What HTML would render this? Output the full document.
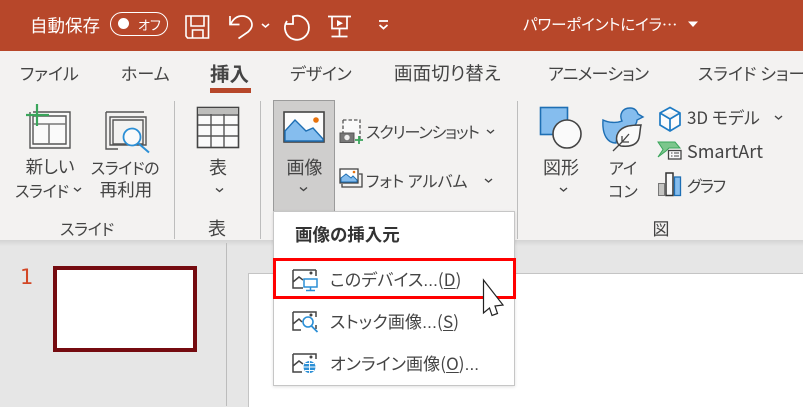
<!DOCTYPE html>
<html lang="ja"><head><meta charset="utf-8">
<style>
html,body{margin:0;padding:0}
body{width:803px;height:406px;position:relative;overflow:hidden;background:#e6e6e6;font-family:"Liberation Sans","Noto Sans CJK JP",sans-serif}
.a{position:absolute}
.t{position:absolute;white-space:nowrap;color:#444;font-size:16px;line-height:20px;font-family:"Noto Sans CJK JP","Liberation Sans",sans-serif;font-feature-settings:"palt";font-weight:400}
.c{text-align:center;transform:translateX(-50%)}
.w{color:#fff;font-weight:400}
.tab{font-size:17px;line-height:22px;top:62px;color:#444}
.d{font-family:"Liberation Sans",sans-serif}
svg{position:absolute;overflow:visible}
u{text-underline-offset:2px}
</style></head><body>
<div class="a" style="left:0;top:0;width:803px;height:51px;background:#b7472a"></div>
<div class="a" style="left:0;top:51px;width:803px;height:189px;background:#f3f2f1"></div>
<div class="a" style="left:0;top:240px;width:803px;height:6px;background:linear-gradient(#d4d4d4,#e6e6e6)"></div>

<!-- title bar -->
<div class="t w" style="left:30px;top:16px;font-size:17.5px">自動保存</div>
<div class="a" style="left:110px;top:12px;width:56px;height:22px;border:1px solid #fff;border-radius:12px"></div>
<div class="a" style="left:118px;top:18px;width:11px;height:11px;border-radius:50%;background:#fff"></div>
<div class="t w" style="left:138px;top:15px;font-size:13px">オフ</div>
<svg style="left:0;top:0" width="803" height="51" fill="none" stroke="#fff" stroke-width="1.6">
<path d="M186 16h22.500v22h-21l-1.500-2zM191 16v10h13V16M192.500 38v-8h10.500v8"/>
<path d="M230 16v8.500h9.500M230.500 24.500C233 19 237 16 242 16c6 0 10 4 10 9 0 3-2 5-4 7l-9.500 6.500" stroke-width="1.700"/>
<path d="M262 24l3.500 3 3.500-3" stroke-width="1.600"/>
<path d="M293 16.400A12 12 0 1 1 287 21" stroke-width="1.800"/><path d="M293 15.500v8.500h-7" stroke-width="1.800"/>
<path d="M328 16.500h23M332 16.500v12h15v-12M339.500 28.500v8M331.500 36.500h16" stroke-width="1.700"/>
<path d="M337 20l6 3.200-6 3.200z" fill="#fff" stroke="none"/>
<path d="M379 21h9" stroke-width="1.800"/><path d="M379.500 25l4 3.500 4-3.500" stroke-width="1.800"/>
<path d="M688 21.500h10l-5 5.500z" fill="#fff" stroke="none"/>
</svg>
<div class="t w" style="left:523px;top:14px;font-size:15.500px;letter-spacing:-.1px">パワーポイントにイラ…</div>

<!-- tabs -->
<div class="t tab" style="left:20px">ファイル</div>
<div class="t tab" style="left:121px">ホーム</div>
<div class="t tab" style="left:210px;font-weight:700;font-size:19.500px;color:#444">挿入</div>
<div class="a" style="left:210px;top:88px;width:41px;height:5px;background:#b7472a"></div>
<div class="t tab" style="left:290px;letter-spacing:-.2px">デザイン</div>
<div class="t tab" style="left:394px;font-size:18.500px;letter-spacing:.1px">画面切り替え</div>
<div class="t tab" style="left:548px;letter-spacing:-.8px">アニメーション</div>
<div class="t tab" style="left:698px">スライド ショー</div>

<!-- separators -->
<div class="a" style="left:174px;top:101px;width:1px;height:138px;background:#bdbdbd"></div>
<div class="a" style="left:260px;top:101px;width:1px;height:138px;background:#bdbdbd"></div>
<div class="a" style="left:517px;top:101px;width:1px;height:138px;background:#bdbdbd"></div>

<!-- selected button -->
<div class="a" style="left:273px;top:100px;width:60px;height:110px;background:#cfcecd;border:1px solid #9b9b9b"></div>

<svg style="left:0;top:0" width="803" height="240" fill="none">
<!-- new slide -->
<path d="M30 143V113h40v33H30z" fill="#fafafa" stroke="none"/>
<path d="M33 112h37v36H30v-36M33 116h33v28H33v-28" stroke="#555" stroke-width="1.400"/>
<path d="M33 124h33M49 124v20" stroke="#777" stroke-width="1.600"/>
<path d="M37 104v22M26 115h23" stroke="#3aa55b" stroke-width="2.200"/>
<!-- reuse -->
<path d="M106 112h38M106 112v37h12M110 117h36v28h-36zM113 120h30v24h-30z" stroke="#555" stroke-width="1.400"/>
<circle cx="132" cy="137" r="8.500" stroke="#2b8fd6" stroke-width="1.800" fill="#fafafa"/>
<path d="M138 143l11 9.500" stroke="#2b8fd6" stroke-width="2"/>
<!-- table -->
<rect x="197.500" y="107.500" width="41" height="40" fill="#fafafa" stroke="#444" stroke-width="1.600"/>
<rect x="198" y="108" width="40" height="6" fill="#bdbdbb"/>
<path d="M198 115h40M198 125h40M198 136h40M211 114v33M224 114v33" stroke="#555" stroke-width="1.400"/>
<!-- picture -->
<rect x="284" y="112" width="40" height="30" fill="#fcfcfc" stroke="#444" stroke-width="1.600"/>
<path d="M285 131l10-11 11 11 7-3 10 11v2h-38z" fill="#85bdee" stroke="#1e6fb4" stroke-width="1.400"/>
<circle cx="316" cy="120" r="2.800" fill="#e8710a"/>
<!-- screenshot -->
<rect x="343" y="120" width="17" height="18" fill="#fafafa"/>
<path d="M343 120h17v19" stroke="#555" stroke-width="1.300" stroke-dasharray="3.500 2"/>
<path d="M343 120v13" stroke="#555" stroke-width="1.300" stroke-dasharray="3.500 2"/>
<rect x="340" y="133" width="14" height="9.500" fill="#777" stroke="#555"/>
<circle cx="347" cy="137.500" r="2.700" fill="#eee"/>
<path d="M359 136v8M355 140h8" stroke="#3aa55b" stroke-width="1.800"/>
<!-- photo album -->
<rect x="340" y="169" width="18" height="14" fill="#fff" stroke="#444" stroke-width="1.300"/>
<path d="M341 178l5-4 5 4 2-2 4 4v2h-16z" fill="#85bdee" stroke="#1e6fb4"/>
<circle cx="354" cy="172" r="1.300" fill="#e8710a"/>
<path d="M359 174h3v13h-20v-3" stroke="#444" stroke-width="1.300"/>
<!-- shapes -->
<rect x="540.500" y="107.500" width="27" height="27" fill="#85bdee" stroke="#1e6fb4" stroke-width="1.600"/>
<circle cx="567" cy="134" r="14" fill="#fafafa" stroke="#444" stroke-width="1.600"/>
<!-- duck icon -->
<path d="M603 120c6 3 14 3 19 1-3-6 0-13 8-13 5 0 7 3 8 6l5 3-6 3c0 4-3 6-5 8l-14 7c-1 3-2 6-2 8-9 0-14-9-13-23z" fill="#85bdee" stroke="#1e6fb4" stroke-width="1.400"/>
<path d="M641 125c-11 0-19 1-23 8-3 5-1 12 3 13 9 1 16-1 18-8 1-4 1-9 2-13z" fill="#fafafa" stroke="#444" stroke-width="1.500"/>
<path d="M613 151l9-9 7-8M622 142v-6M622 142h7" stroke="#444" stroke-width="1.300"/>
<!-- 3D -->
<path d="M660 113l10-5.500 10 5.500v12l-10 6-10-6zM660 113l10 6 10-6M670 119v12" stroke="#1e7bc4" stroke-width="1.700" fill="#fcfcfc"/>
<!-- smartart -->
<path d="M658 142h17l5 6h-11l-3 3-8 6h-0l5-7.500z" fill="#7cc68c" stroke="#3aa55b"/>
<rect x="668.500" y="150.500" width="12.500" height="8.500" fill="#fafafa" stroke="#444" stroke-width="1.300"/>
<path d="M671 153h1.500M674 153h5M671 156h1.500M674 156h5" stroke="#444"/>
<!-- chart -->
<rect x="658.500" y="183.500" width="6" height="12" fill="#c4c4c2" stroke="#777"/>
<rect x="666" y="173" width="7" height="22.500" fill="#fafafa" stroke="#333" stroke-width="1.500"/>
<rect x="674.500" y="177" width="6" height="18.500" fill="#85bdee" stroke="#1e6fb4" stroke-width="1.300"/>
<!-- chevrons -->
<g stroke="#444" stroke-width="1.400">
<path d="M74 188l3.500 3 3.500-3"/><path d="M216 188.500l3.500 3 3.500-3"/><path d="M300 187.500l3.500 3 3.500-3"/>
<path d="M487 130l3.500 3 3.500-3"/><path d="M485 179l3.500 3 3.500-3"/>
<path d="M560 188l3.500 3 3.500-3"/><path d="M775 116l3.500 3 3.500-3"/>
</g>
</svg>

<!-- ribbon labels -->
<div class="t c" style="left:50px;top:157px;font-size:17.500px">新しい</div>
<div class="t" style="left:15px;top:180px;letter-spacing:-.3px">スライド</div>
<div class="t c" style="left:125px;top:157px;letter-spacing:-.4px">スライドの</div>
<div class="t c" style="left:126px;top:180px;font-size:17.500px">再利用</div>
<div class="t c" style="left:218px;top:157px;font-size:18px">表</div>
<div class="t c" style="left:304.500px;top:157px;font-size:18px">画像</div>
<div class="t" style="left:366px;top:121px;letter-spacing:-1.100px">スクリーンショット</div>
<div class="t" style="left:366px;top:170px">フォト アルバム</div>
<div class="t c" style="left:561px;top:157px;font-size:18px">図形</div>
<div class="t c" style="left:623px;top:157px">アイ</div>
<div class="t c" style="left:623px;top:180px">コン</div>
<div class="t" style="left:687px;top:107px;font-size:17px">3D モデル</div>
<div class="t" style="left:687px;top:141px;font-size:18px">SmartArt</div>
<div class="t" style="left:687px;top:175px;letter-spacing:-1.300px">グラフ</div>
<div class="t c" style="left:87px;top:218px;letter-spacing:-.3px">スライド</div>
<div class="t c" style="left:217px;top:218px;font-size:18px">表</div>
<div class="t c" style="left:661px;top:218px;font-size:17px">図</div>

<!-- lower area -->
<div class="a" style="left:226px;top:243px;width:1px;height:163px;background:#bcbcbc"></div>
<div class="a" style="left:248px;top:273px;width:555px;height:133px;background:#fff;border-left:1px solid #c4c4c4;border-top:1px solid #c4c4c4"></div>
<div class="t d" style="left:20px;top:267px;color:#d24726;font-size:21px;font-weight:400;font-family:'DejaVu Sans',sans-serif">1</div>
<div class="a" style="left:53px;top:266px;width:136px;height:78px;background:#fff;border:4px solid #750b10"></div>

<!-- menu -->
<div class="a" style="left:273px;top:211px;width:240px;height:173px;background:#fff;border:1px solid #c6c6c6;box-shadow:0 1px 3px rgba(0,0,0,.12)"></div>
<div class="t" style="left:295px;top:225px;font-weight:700;font-size:17.500px;color:#333">画像の挿入元</div>
<div class="a" style="left:273px;top:258px;width:237px;height:35px;border:3px solid #f00"></div>
<div class="t" style="left:330px;top:269px;font-size:17px;color:#444;letter-spacing:.1px">このデバイス<span class="d">...</span>(<u>D</u>)</div>
<div class="t" style="left:330px;top:311px;font-size:17px;color:#444;letter-spacing:.2px">ストック画像<span class="d">...</span>(<u>S</u>)</div>
<div class="t" style="left:330px;top:353px;font-size:17px;color:#444;letter-spacing:.1px">オンライン画像(<u>O</u>)<span class="d">...</span></div>
<svg style="left:0;top:0" width="803" height="406" fill="none">
<g stroke="#444" stroke-width="1.500">
<path d="M293 270h23M316 270v6M293 270v18h10M293 282l6-5 4 3"/>
<path d="M293 312h23v5M293 312v18h8M293 324l6-5 3 3M316 325v4"/>
<path d="M293 354h23v5M293 354v18h9M293 366l6-5 4 3"/>
</g>
<circle cx="311" cy="273" r="1.500" fill="#444"/>
<circle cx="311" cy="315" r="1.500" fill="#444"/>
<circle cx="311" cy="357" r="1.500" fill="#444"/>
<rect x="304" y="279" width="13" height="8" fill="#fff" stroke="#2b8fd6" stroke-width="1.500"/>
<path d="M310.500 287v3M306 290.500h9" stroke="#2b8fd6" stroke-width="1.500"/>
<circle cx="308" cy="322" r="5" stroke="#2b8fd6" stroke-width="1.600" fill="#fff"/>
<path d="M311.500 326l6 6" stroke="#2b8fd6" stroke-width="1.800"/>
<circle cx="309.500" cy="367" r="6.500" fill="#2b8fd6" stroke="#fff"/>
<path d="M303 367h13M309.500 361v13M305 363.500h9M305 370.500h9" stroke="#fff" stroke-width=".9"/>
<path d="M483.500 280L503 305l-8 1 2.500 7.500-5.500 2-2.500-7.500-6 5z" fill="#fff" stroke="#222" stroke-width="1.200"/>
</svg>
</body></html>
